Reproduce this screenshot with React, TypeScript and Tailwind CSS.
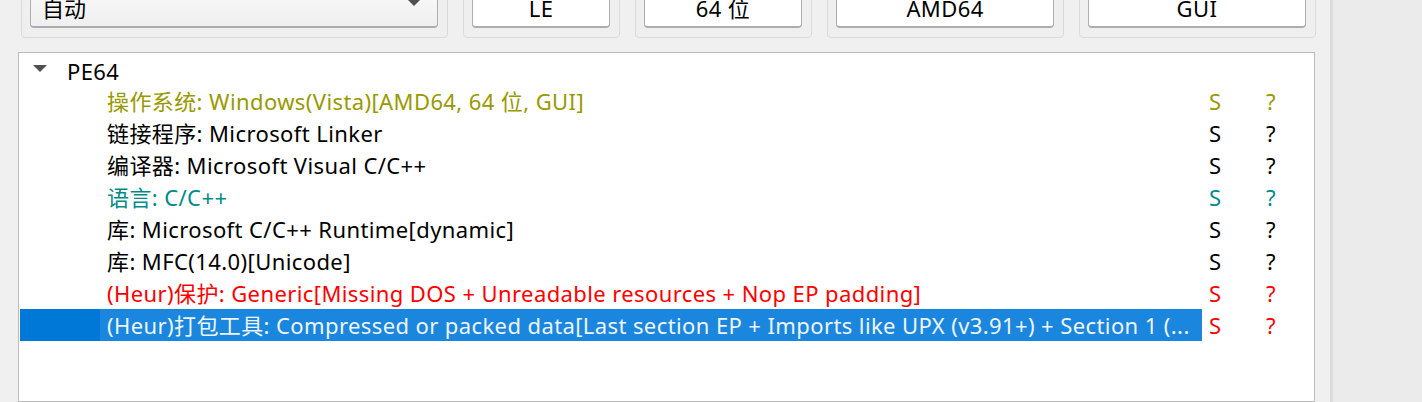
import React from 'react';

interface IRow {
  label: string;
  color: string;
  selected?: boolean;
}

const rows: IRow[] = [
  { label: '操作系统: Windows(Vista)[AMD64, 64 位, GUI]', color: 'text-[#999900]' },
  { label: '链接程序: Microsoft Linker', color: 'text-black' },
  { label: '编译器: Microsoft Visual C/C++', color: 'text-black' },
  { label: '语言: C/C++', color: 'text-[#008b8b]' },
  { label: '库: Microsoft C/C++ Runtime[dynamic]', color: 'text-black' },
  { label: '库: MFC(14.0)[Unicode]', color: 'text-black' },
  { label: '(Heur)保护: Generic[Missing DOS + Unreadable resources + Nop EP padding]', color: 'text-[#ff0000]' },
  {
    label: '(Heur)打包工具: Compressed or packed data[Last section EP + Imports like UPX (v3.91+) + Section 1 (...',
    color: 'text-[#ff0000]',
    selected: true,
  },
];

const font = { fontFamily: '"Noto Sans", "Noto Sans CJK SC", sans-serif' };

const GroupBox = ({ width, children }: { width: string; children: React.ReactNode }) => (
  <div className={`${width} h-[52px] rounded-[4px] border border-[#dadada] bg-[#efefef] pl-[8px] pr-[9px] pb-[9px] flex items-end`}>
    {children}
  </div>
);

const InfoButton = ({ text }: { text: string }) => (
  <div className="w-full h-[40px] rounded-[4px] border border-[#adadad] border-b-2 bg-white flex items-center justify-center text-[22px] tracking-[0.4px] text-black pt-[1px]">
    {text}
  </div>
);

const App = () => {
  return (
    <div className="w-[1422px] h-[402px] overflow-hidden bg-[#f0f0f0] flex" style={font}>
      <div className="w-[1330px] flex flex-col">
        <div className="flex gap-[15px] pl-[21px] mt-[-14px]">
          <GroupBox width="w-[427px]">
            <div className="w-full h-[40px] rounded-[4px] border border-[#adadad] border-b-2 bg-gradient-to-b from-[#fafafa] to-[#efefef] flex items-center justify-between pl-[11px] pr-[16px] text-[22px] pt-[1px]">
              <span>自动</span>
              <svg width="14" height="8" viewBox="0 0 14 8" className="mb-[10px]">
                <polygon points="0,0 14,0 7,7" fill="#505050" />
              </svg>
            </div>
          </GroupBox>
          <GroupBox width="w-[157px]">
            <InfoButton text="LE" />
          </GroupBox>
          <GroupBox width="w-[177px]">
            <InfoButton text="64 位" />
          </GroupBox>
          <GroupBox width="w-[237px]">
            <InfoButton text="AMD64" />
          </GroupBox>
          <GroupBox width="w-[237px]">
            <InfoButton text="GUI" />
          </GroupBox>
        </div>
        <div className="ml-[18px] mt-[14px] w-[1297px] flex-1 border border-[#bcbcbc] bg-white text-[22px] tracking-[0.4px]">
          <div className="h-[32px] flex items-center">
            <svg width="14" height="8" viewBox="0 0 14 8" className="ml-[14px] mr-[20px]">
              <polygon points="0,0 14,0 7,7" fill="#505050" />
            </svg>
            <span className="text-black pt-[4px]">PE64</span>
          </div>
          {rows.map((row) => (
            <div key={row.label} className="h-[32px] flex items-center">
              <div
                className={`w-[1182px] ml-[1px] h-full flex items-center ${row.selected ? 'bg-[#0078d7]' : ''}`}
              >
                <div
                  className={`ml-[80px] flex-1 min-w-0 h-full flex items-center pl-[7px] overflow-hidden whitespace-nowrap ${
                    row.selected ? 'bg-[#1a86dd] text-[#eef5fc]' : row.color
                  }`}
                >
                  {row.label}
                </div>
              </div>
              <div className={`w-[57px] pl-[7px] ${row.color}`}>S</div>
              <div className={`pl-[7px] ${row.color}`}>?</div>
            </div>
          ))}
        </div>
      </div>
      <div className="flex-1 border-l-[3px] border-[#dcdcdc] bg-[#ebebeb]" />
    </div>
  );
};

export default App;
